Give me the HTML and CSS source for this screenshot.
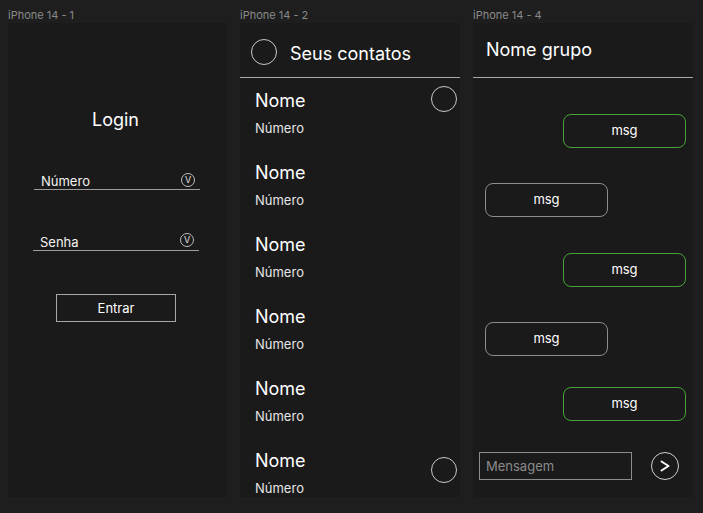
FILE: index.html
```html
<!DOCTYPE html>
<html lang="pt-BR">
<head>
<meta charset="utf-8">
<title>Telas</title>
<link rel="stylesheet" href="styles.css">
</head>
<body>
<div class="canvas">
  <section class="col col-1">
    <div class="label">iPhone 14 - 1</div>
    <div class="frame login">
      <h1 class="login-title">Login</h1>
      <div class="field field-num"><span>Número</span><span class="vicon">V</span></div>
      <div class="field field-pass"><span>Senha</span><span class="vicon vicon-pass">V</span></div>
      <button class="btn">Entrar</button>
    </div>
  </section>

  <section class="col col-2">
    <div class="label">iPhone 14 - 2</div>
    <div class="frame">
      <div class="contacts-header">
        <span class="circle"></span>
        <span class="header-title">Seus contatos</span>
      </div>
      <div class="contact">
        <div class="contact-text"><div class="name">Nome</div><div class="number">Número</div></div>
        <span class="circle circle-first"></span>
      </div>
      <div class="contact">
        <div class="contact-text"><div class="name">Nome</div><div class="number">Número</div></div>
      </div>
      <div class="contact">
        <div class="contact-text"><div class="name">Nome</div><div class="number">Número</div></div>
      </div>
      <div class="contact">
        <div class="contact-text"><div class="name">Nome</div><div class="number">Número</div></div>
      </div>
      <div class="contact">
        <div class="contact-text"><div class="name">Nome</div><div class="number">Número</div></div>
      </div>
      <div class="contact">
        <div class="contact-text"><div class="name">Nome</div><div class="number">Número</div></div>
        <span class="circle circle-last"></span>
      </div>
    </div>
  </section>

  <section class="col col-3">
    <div class="label">iPhone 14 - 4</div>
    <div class="frame chat">
      <div class="chat-header">Nome grupo</div>
      <div class="messages">
        <div class="bubble out">msg</div>
        <div class="bubble in">msg</div>
        <div class="bubble out gap36">msg</div>
        <div class="bubble in">msg</div>
        <div class="bubble out gap31">msg</div>
      </div>
      <div class="composer">
        <input class="input" type="text" placeholder="Mensagem">
        <span class="send">
          <svg width="12" height="12" viewBox="0 0 12 12"><polyline points="2.5,1.5 9.5,6 2.5,10.5" fill="none" stroke="#ffffff" stroke-width="1.9" stroke-linecap="round" stroke-linejoin="round"/></svg>
        </span>
      </div>
    </div>
  </section>
</div>
</body>
</html>
```

FILE: styles.css
```css
* {
  box-sizing: border-box;
  margin: 0;
  padding: 0;
}

html, body {
  width: 703px;
  height: 513px;
  overflow: hidden;
}

body {
  background: #1e1e1e;
  font-family: Inter, "Noto Sans", sans-serif;
  color: #ffffff;
}

.canvas {
  display: flex;
  gap: 13px;
  padding-left: 8px;
}

.col-1 { width: 219px; }
.col-2, .col-3 { width: 220px; }

.label {
  height: 23px;
  padding-top: 9px;
  font-size: 11px;
  line-height: 13px;
  color: #8a8a8a;
}

.frame {
  height: 474px;
  background: #1a1a1a;
  overflow: hidden;
  display: flex;
  flex-direction: column;
}

/* Login */
.login { align-items: flex-start; }

.login-title {
  font-size: 18px;
  font-weight: 400;
  line-height: 22px;
  margin: 86px 0 0 84px;
}

.field {
  width: 166px;
  height: 16px;
  margin-left: 26px;
  border-bottom: 1px solid #9c9c9c;
  display: flex;
  justify-content: space-between;
  align-items: flex-start;
  padding: 0 5px 0 7px;
  font-size: 13px;
  line-height: 15px;
  color: #f2f2f2;
}

.field-num { margin-top: 43px; }
.field-pass { margin-top: 45px; margin-left: 25px; }

.vicon {
  width: 14px;
  height: 14px;
  border: 1px solid #bdbdbd;
  border-radius: 50%;
  font-size: 9px;
  line-height: 12px;
  text-align: center;
  color: #e0e0e0;
  margin-top: -1px;
}

.vicon-pass { margin-top: -2px; }

.btn {
  margin: 43px 0 0 48px;
  width: 120px;
  height: 28px;
  border: 1px solid #a8a8a8;
  background: transparent;
  color: #ffffff;
  font-family: Inter, "Noto Sans", sans-serif;
  font-size: 13px;
}

/* Contacts */
.contacts-header {
  height: 55px;
  flex-shrink: 0;
  border-bottom: 1px solid #a9a9a9;
  display: flex;
  align-items: flex-start;
  gap: 13px;
  padding: 16px 0 0 11px;
}

.circle {
  width: 26px;
  height: 26px;
  flex-shrink: 0;
  border: 1px solid #c8c8c8;
  border-radius: 50%;
}

.header-title {
  font-size: 18px;
  line-height: 26px;
  margin-top: 2px;
}

.contact {
  height: 72px;
  flex-shrink: 0;
  display: flex;
  justify-content: space-between;
  align-items: flex-start;
  padding: 12px 3px 0 15px;
}

.name {
  font-size: 18px;
  line-height: 22px;
}

.number {
  font-size: 13px;
  line-height: 16px;
  margin-top: 8px;
  color: #e6e6e6;
}

.circle-first { margin-top: -4px; }
.circle-last { margin-top: 7px; }

/* Chat */
.chat-header {
  height: 55px;
  flex-shrink: 0;
  border-bottom: 1px solid #a9a9a9;
  padding: 16px 0 0 13px;
  font-size: 18px;
  line-height: 22px;
}

.messages {
  display: flex;
  flex-direction: column;
  padding-top: 36px;
}

.bubble {
  width: 123px;
  height: 34px;
  flex-shrink: 0;
  border: 1px solid;
  border-radius: 8px;
  display: flex;
  align-items: center;
  justify-content: center;
  font-size: 13px;
  color: #ffffff;
  padding-bottom: 2px;
}

.bubble + .bubble { margin-top: 35px; }
.bubble.gap36 { margin-top: 36px; }
.bubble.gap31 { margin-top: 31px; }

.out {
  align-self: flex-end;
  margin-right: 7px;
  border-color: #46a236;
}

.in {
  align-self: flex-start;
  margin-left: 12px;
  border-color: #8c8c8c;
}

.composer {
  margin-top: auto;
  margin-bottom: 17px;
  display: flex;
  gap: 19px;
  padding-left: 6px;
}

.input {
  width: 153px;
  height: 28px;
  border: 1px solid #8c8c8c;
  background: transparent;
  padding-left: 6px;
  font-family: Inter, "Noto Sans", sans-serif;
  font-size: 13px;
  color: #ffffff;
  outline: none;
}

.input::placeholder { color: #8a8a8a; }

.send {
  width: 28px;
  height: 28px;
  border: 1px solid #d0d0d0;
  border-radius: 50%;
  display: flex;
  align-items: center;
  justify-content: center;
}
```
